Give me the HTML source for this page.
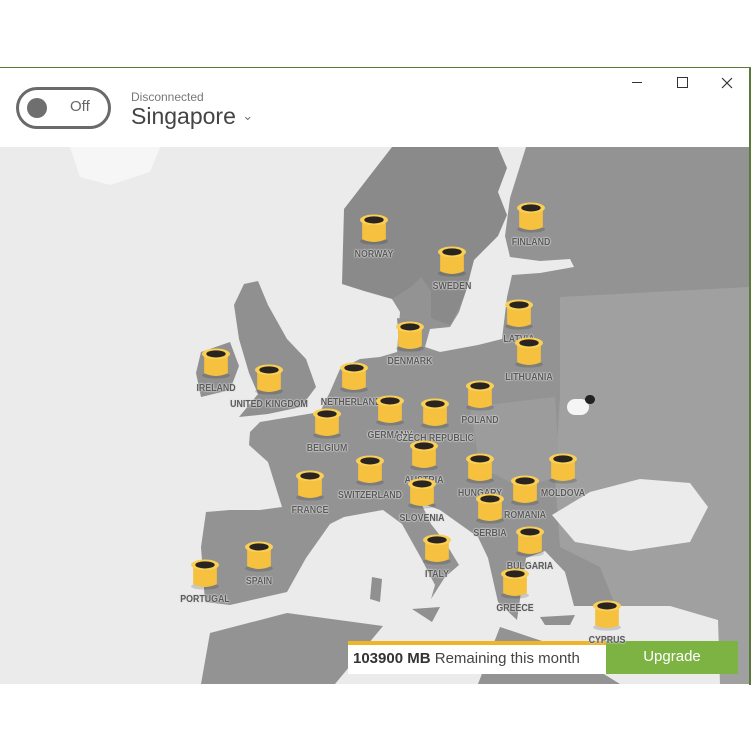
<!DOCTYPE html>
<html><head><meta charset="utf-8"><style>
*{margin:0;padding:0;box-sizing:border-box}
body{width:751px;height:751px;background:#fff;position:relative;overflow:hidden;font-family:"Liberation Sans",sans-serif}
.win{position:absolute;left:0;top:67px;width:751px;height:618px;border-top:1px solid #5a7a3a;border-right:2px solid #5a7a3a;background:#fff}
.map{position:absolute;left:0;top:147px;width:749px;height:537px;background:#ebebeb;overflow:hidden}
.b{position:absolute;width:28px;height:33px}
.lbl{position:absolute;font-size:10px;font-weight:bold;color:#5a5a5a;transform:translateX(-50%) scaleX(.88);white-space:nowrap;text-shadow:0 0 2px #ddd,0 0 2px #ddd,0 0 1px #ddd}
</style></head><body>
<div class="win">
 <div style="position:absolute;left:16px;top:19px;width:95px;height:42px;border:3px solid #6a6a6a;border-radius:21px"></div>
 <div style="position:absolute;left:27px;top:30px;width:20px;height:20px;border-radius:50%;background:#6f6f6f"></div>
 <div style="position:absolute;left:70px;top:30px;font-size:15px;color:#666">Off</div>
 <div style="position:absolute;left:131px;top:22px;font-size:12px;color:#777">Disconnected</div>
 <div style="position:absolute;left:131px;top:35px;font-size:23px;color:#444">Singapore <span style="font-size:13px;color:#777;vertical-align:4px">&#8964;</span></div>
 <div style="position:absolute;left:632px;top:14px;width:10px;border-top:1px solid #333"></div>
 <div style="position:absolute;left:677px;top:9px;width:11px;height:11px;border:1px solid #333"></div>
 <svg style="position:absolute;left:721px;top:9px" width="12" height="12"><path d="M1 1L11 11M11 1L1 11" stroke="#333" stroke-width="1.2"/></svg>
</div>
<div class="map">
<svg width="749" height="537" style="position:absolute;left:0;top:0">
 <rect width="749" height="537" fill="#939393"/>
 <path d="M560 150 L749 140 L749 537 L640 537 L620 470 L600 420 L560 400 L555 330 L560 250 Z" fill="#a0a0a0"/>
 <path d="M470 260 L555 250 L560 330 L520 340 L480 320 Z" fill="#9c9c9c"/>
 <path d="M392 0 L498 0 L507 21 L498 45 L507 68 L498 89 L474 113 L466 144 L459 161 L450 178 L431 171 L431 144 L421 130 L411 140 L392 152 L364 144 L342 137 L344 62 Z" fill="#8a8a8a"/>
 <g fill="#ebebeb">
  <path d="M0 0 L392 0 L344 62 L342 137 L364 144 L392 152 L400 165 L397 205 L380 210 L360 212 L340 222 L330 245 L320 265 L290 270 L260 275 L250 285 L249 298 L268 315 L282 360 L260 363 L230 363 L206 365 L201 400 L205 455 L230 458 L287 445 L306 411 L330 377 L344 370 L383 363 L402 377 L421 411 L435 438 L431 452 L445 430 L459 418 L445 395 L431 377 L421 356 L440 363 L478 390 L488 411 L498 455 L517 473 L526 411 L545 404 L565 425 L574 459 L670 459 L718 473 L720 537 L620 537 L560 500 L500 480 L478 537 L335 537 L383 479 L287 466 L210 486 L201 537 L0 537 Z"/>
  <path d="M498 0 L507 21 L498 45 L507 68 L498 89 L474 113 L466 144 L459 165 L450 180 L430 182 L425 200 L440 205 L478 198 L502 192 L507 150 L512 128 L540 126 L574 120 L570 112 L540 114 L510 110 L505 89 L510 51 L526 0 Z"/>
  <path d="M552 368 L590 345 L640 332 L690 336 L708 360 L690 395 L630 404 L575 395 Z"/>
 </g>
 <path d="M70 0 L160 0 L150 25 L110 38 L80 30 Z" fill="#f6f6f6"/>
 <g fill="#909090">
  <path d="M244 137 L258 134 L268 158 L287 192 L306 212 L316 240 L301 260 L268 267 L239 270 L258 247 L249 226 L239 192 L234 158 Z"/>
  <path d="M201 205 L230 195 L239 219 L230 243 L201 250 L196 226 Z"/>
  <path d="M397 171 L421 175 L421 205 L400 205 Z"/>
  <path d="M372 430 L382 432 L380 455 L370 452 Z"/>
  <path d="M412 462 L440 460 L432 475 Z"/>
  <path d="M540 470 L575 468 L570 478 L545 478 Z"/>
 </g>
</svg>
<div style="position:absolute;left:567px;top:252px;width:22px;height:16px;border-radius:8px;background:#f5f5f5"></div>
<div style="position:absolute;left:585px;top:248px;width:10px;height:9px;border-radius:5px;background:#222"></div>
<div style="position:absolute;left:348px;top:494px;width:258px;height:4px;background:#f0b428"></div>
<div style="position:absolute;left:348px;top:498px;width:258px;height:29px;background:#fff;font-size:15px;color:#444;padding:5px 0 0 5px"><b style="color:#333">103900 MB</b> Remaining this month</div>
<div style="position:absolute;left:606px;top:494px;width:132px;height:33px;background:#7cb342;color:#fff;font-size:15px;text-align:center;line-height:31px">Upgrade</div>
</div>
<div id="pins"></div>
<script>
var p=[["NORWAY",374,228],["SWEDEN",452,260],["FINLAND",531,216],["LATVIA",519,313],["LITHUANIA",529,351],["DENMARK",410,335],["IRELAND",216,362],["UNITED KINGDOM",269,378],["NETHERLANDS",354,376],["BELGIUM",327,422],["GERMANY",390,409],["CZECH REPUBLIC",435,412],["POLAND",480,394],["AUSTRIA",424,454],["SWITZERLAND",370,469],["FRANCE",310,484],["HUNGARY",480,467],["MOLDOVA",563,467],["ROMANIA",525,489],["SLOVENIA",422,492],["SERBIA",490,507],["BULGARIA",530,540],["ITALY",437,548],["GREECE",515,582],["SPAIN",259,555],["PORTUGAL",205,573],["CYPRUS",607,614]];
var h="";p.forEach(function(a){var x=a[1],y=a[2];
h+='<svg class="b" style="left:'+(x-14)+'px;top:'+(y-16)+'px" viewBox="0 0 26 30"><ellipse cx="13" cy="27" rx="13" ry="3" fill="rgba(0,0,0,.15)"/><path d="M2 8 V25 Q13 30 24 25 V8 Z" fill="#f6c13e"/><ellipse cx="13" cy="7" rx="13" ry="5" fill="#f9cf56"/><ellipse cx="13" cy="7" rx="9" ry="3.3" fill="#2a2420"/></svg>';
h+='<div class="lbl" style="left:'+x+'px;top:'+(y+21)+'px">'+a[0]+'</div>';});
document.getElementById("pins").innerHTML=h;
</script>
</body></html>
